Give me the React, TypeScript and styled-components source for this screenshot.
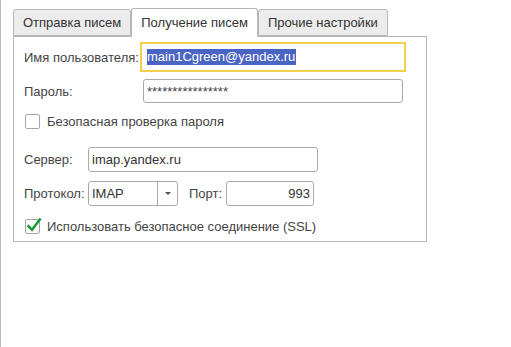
import * as React from "react";
import styled, { createGlobalStyle } from "styled-components";

const GlobalStyle = createGlobalStyle`
  html, body {
    margin: 0;
    padding: 0;
    background: #ffffff;
  }
  body {
    font-family: "Liberation Sans", Arial, sans-serif;
    font-size: 13px;
    color: #333333;
  }
`;

const Page = styled.div`
  box-sizing: border-box;
  height: 347px;
  border-left: 1px solid #bcbcbc;
  padding: 8px 0 0 12px;
`;

const Settings = styled.div`
  width: 414px;
`;

const TabBar = styled.div`
  display: flex;
  align-items: flex-end;
`;

const Tab = styled.div<{ $active?: boolean }>`
  box-sizing: border-box;
  position: relative;
  z-index: ${p => (p.$active ? 1 : 0)};
  height: ${p => (p.$active ? "29px" : "27px")};
  margin-bottom: ${p => (p.$active ? "-1px" : "0")};
  padding: ${p => (p.$active ? "0 9px 2px" : "0 9px")};
  display: flex;
  align-items: center;
  border: 1px solid #b6b6b6;
  border-bottom: ${p => (p.$active ? "none" : "1px solid #b6b6b6")};
  border-radius: 3px 3px 0 0;
  background: ${p => (p.$active ? "#ffffff" : "#ececec")};
  color: #333333;
  white-space: nowrap;
`;

const Panel = styled.div`
  box-sizing: border-box;
  border: 1px solid #b6b6b6;
  padding: 0 10px 7px;
  display: flex;
  flex-direction: column;
`;

const Row = styled.div<{ $top: number }>`
  display: flex;
  align-items: center;
  margin-top: ${p => p.$top}px;
`;

const Label = styled.div<{ $width: number; $gap?: number }>`
  width: ${p => p.$width}px;
  margin-left: ${p => p.$gap || 0}px;
  flex-shrink: 0;
  color: #444444;
  white-space: nowrap;
`;

const Field = styled.div<{ $width: number; $height?: number; $focused?: boolean; $right?: boolean }>`
  box-sizing: border-box;
  width: ${p => p.$width}px;
  height: ${p => p.$height || 24}px;
  display: flex;
  align-items: center;
  justify-content: ${p => (p.$right ? "flex-end" : "flex-start")};
  padding: 0 3px;
  border: 1px solid ${p => (p.$focused ? "#ffffff" : "#a9a9a9")};
  border-radius: ${p => (p.$focused ? "0" : "3px")};
  outline: ${p => (p.$focused ? "2px solid #f3d04a" : "none")};
  outline-offset: 1px;
  background: #ffffff;
  color: #333333;
  white-space: nowrap;
  overflow: hidden;
`;

const Selected = styled.span`
  background: #4a64c4;
  color: #ffffff;
  line-height: 16px;
  padding: 0 1px 0 0;
`;

const Stars = styled.span`
  color: #444444;
`;

const Combo = styled.div`
  box-sizing: border-box;
  width: 90px;
  height: 25px;
  display: flex;
  border: 1px solid #a9a9a9;
  border-radius: 3px;
  background: #ffffff;
`;

const ComboText = styled.div`
  flex: 1;
  display: flex;
  align-items: center;
  padding: 0 3px;
  color: #333333;
`;

const ComboButton = styled.div`
  width: 19px;
  border-left: 1px solid #a9a9a9;
  display: flex;
  align-items: center;
  justify-content: center;
`;

const Arrow = styled.div`
  width: 0;
  height: 0;
  border-left: 3px solid transparent;
  border-right: 3px solid transparent;
  border-top: 3px solid #555555;
`;

const CheckRow = styled.label`
  display: flex;
  align-items: center;
  gap: 7px;
  color: #444444;
  white-space: nowrap;
`;

const Box = styled.span`
  box-sizing: border-box;
  position: relative;
  width: 15px;
  height: 15px;
  border: 1px solid #a6a6a6;
  border-radius: 2px;
  background: #ffffff;
  margin-left: 1px;
`;

const Tick = styled.svg`
  position: absolute;
  left: 0;
  top: -3px;
`;

const Checkbox: React.FC<{ checked?: boolean; text: string }> = ({ checked, text }) => (
  <CheckRow>
    <Box>
      {checked && (
        <Tick width="16" height="16" viewBox="0 0 16 16">
          <path d="M2.5 9.2 L6 12.8 L13.8 2.6" fill="none" stroke="#1f9a3b" strokeWidth="2.6" strokeLinecap="square" />
        </Tick>
      )}
    </Box>
    {text}
  </CheckRow>
);

export default function App() {
  return (
    <>
      <GlobalStyle />
      <Page>
        <Settings>
          <TabBar>
            <Tab>Отправка писем</Tab>
            <Tab $active>Получение писем</Tab>
            <Tab>Прочие настройки</Tab>
          </TabBar>
          <Panel>
            <Row $top={8}>
              <Label $width={119}>Имя пользователя:</Label>
              <Field $width={260} $focused>
                <Selected>main1Cgreen@yandex.ru</Selected>
              </Field>
            </Row>
            <Row $top={10}>
              <Label $width={119}>Пароль:</Label>
              <Field $width={260}>
                <Stars>****************</Stars>
              </Field>
            </Row>
            <Row $top={11}>
              <Checkbox text="Безопасная проверка пароля" />
            </Row>
            <Row $top={18}>
              <Label $width={64}>Сервер:</Label>
              <Field $width={230} $height={25}>imap.yandex.ru</Field>
            </Row>
            <Row $top={9}>
              <Label $width={64}>Протокол:</Label>
              <Combo>
                <ComboText>IMAP</ComboText>
                <ComboButton>
                  <Arrow />
                </ComboButton>
              </Combo>
              <Label $width={37} $gap={11}>Порт:</Label>
              <Field $width={88} $height={25} $right>993</Field>
            </Row>
            <Row $top={13}>
              <Checkbox checked text="Использовать безопасное соединение (SSL)" />
            </Row>
          </Panel>
        </Settings>
      </Page>
    </>
  );
}
